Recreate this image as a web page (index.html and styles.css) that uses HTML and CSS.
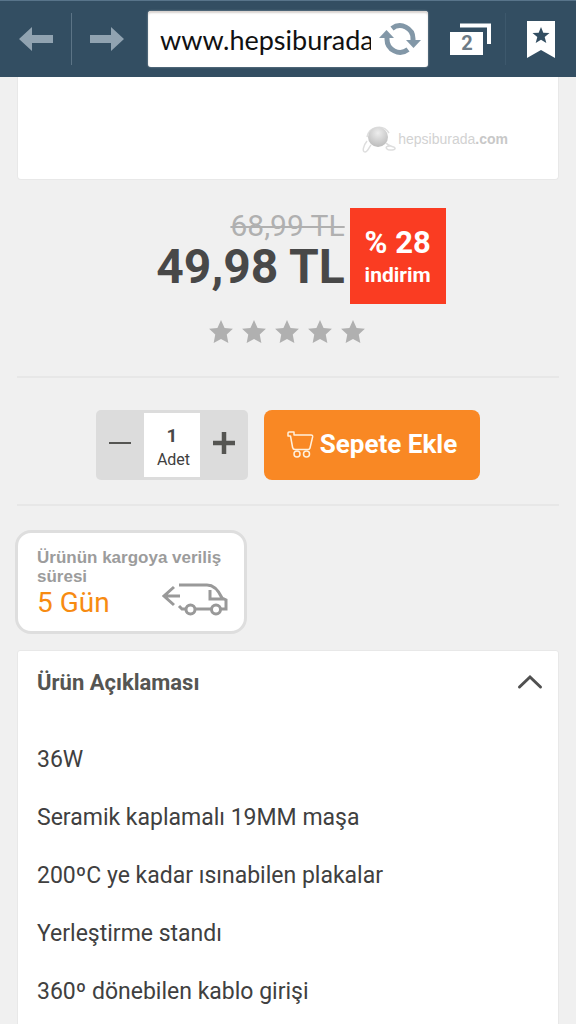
FILE: index.html
```html
<!DOCTYPE html>
<html lang="tr">
<head>
<meta charset="utf-8">
<meta name="viewport" content="width=device-width, initial-scale=1">
<title>hepsiburada.com</title>
<link rel="stylesheet" href="styles.css">
</head>
<body>
<header class="browser-bar">
  <button class="bar-button bar-button-split" aria-label="Geri">
    <svg width="36" height="24" viewBox="0 0 36 24"><path d="M1 12 14 0v8h21v8H14v8z" fill="#91a3b1"/></svg>
  </button>
  <button class="bar-button bar-button-forward" aria-label="İleri">
    <svg width="36" height="24" viewBox="0 0 36 24"><path d="M35 12 22 0v8H1v8h21v8z" fill="#91a3b1"/></svg>
  </button>
  <div class="address">
    <input class="address-input" type="text" aria-label="Adres" value="www.hepsiburada.com">
    <button class="reload" aria-label="Yenile">
      <svg width="42" height="34" viewBox="0 0 42 34">
        <g fill="none" stroke="#8297a7" stroke-width="5"><path d="M13 6.500A13 13 0 0 1 34 17v3"/><path d="M29 27.500A13 13 0 0 1 8 17v-3"/></g>
        <path d="M27 18h15l-7.500 8zM0 16h15L7.500 8z" fill="#8297a7"/>
      </svg>
    </button>
  </div>
  <button class="bar-button bar-button-dim" aria-label="Sekmeler">
    <span class="tabs">
      <svg width="41" height="32" viewBox="0 0 41 32"><path d="M10 2.500h29V21" fill="none" stroke="#fff" stroke-width="4"/><path d="M0 9h33v23H0z" fill="#fff"/></svg>
      <span class="tabs-count">2</span>
    </span>
  </button>
  <button class="bar-button" aria-label="Yer imleri">
    <svg width="28" height="37" viewBox="0 0 28 37"><path d="M0 0h28v37l-14-8-14 8z" fill="#fff"/><path d="m14 6 2.300 5.700 6.200.4-4.800 3.900 1.600 6-5.300-3.300L8.700 22l1.600-6-4.800-3.900 6.200-.4z" fill="#334e62"/></svg>
  </button>
</header>

<main class="page">
  <div class="photo-card">
    <div class="brand">
      <svg width="36" height="29" viewBox="0 0 36 29">
        <defs><radialGradient id="ball" cx=".5" cy=".3" r=".7"><stop offset="0" stop-color="#ededed"/><stop offset="1" stop-color="#bcbcbc"/></radialGradient></defs>
        <g fill="none" stroke="#dedede" stroke-width="1.500"><path d="M5 16C1 21 0 27 3 27s4-5 6-7M24 18c3 4 8 3 9 5s-6 3-8 1 0-3 3-3M5 12a12 12 0 0 1 22-4"/></g>
        <circle cx="16" cy="12" r="10" fill="url(#ball)"/>
      </svg>
      <span class="brand-name">hepsiburada<b class="brand-tld">.com</b></span>
    </div>
  </div>

  <section class="pricing">
    <div class="prices">
      <del class="price-old">68,99 TL</del>
      <strong class="price-now">49,98 TL</strong>
    </div>
    <div class="discount"><span class="discount-rate">% 28</span><span class="discount-label">indirim</span></div>
  </section>

  <div class="stars" role="img" aria-label="Henüz değerlendirilmedi">
    <svg class="star" viewBox="0 0 24 24"><path d="m12 1 3.300 7.200 7.700.9-5.700 5.300 1.500 7.800-6.800-3.800-6.800 3.800 1.500-7.800L1 9.100l7.700-.9z"/></svg>
    <svg class="star" viewBox="0 0 24 24"><path d="m12 1 3.300 7.200 7.700.9-5.700 5.300 1.500 7.800-6.800-3.800-6.800 3.800 1.500-7.800L1 9.100l7.700-.9z"/></svg>
    <svg class="star" viewBox="0 0 24 24"><path d="m12 1 3.300 7.200 7.700.9-5.700 5.300 1.500 7.800-6.800-3.800-6.800 3.800 1.500-7.800L1 9.100l7.700-.9z"/></svg>
    <svg class="star" viewBox="0 0 24 24"><path d="m12 1 3.300 7.200 7.700.9-5.700 5.300 1.500 7.800-6.800-3.800-6.800 3.800 1.500-7.800L1 9.100l7.700-.9z"/></svg>
    <svg class="star" viewBox="0 0 24 24"><path d="m12 1 3.300 7.200 7.700.9-5.700 5.300 1.500 7.800-6.800-3.800-6.800 3.800 1.500-7.800L1 9.100l7.700-.9z"/></svg>
  </div>

  <section class="buy">
    <div class="stepper">
      <button class="step" aria-label="Azalt"><svg width="22" height="22" viewBox="0 0 22 22"><path d="M0 11h22" stroke="#555552" stroke-width="2"/></svg></button>
      <div class="quantity">
        <input class="quantity-input" id="quantity" type="text" inputmode="numeric" value="1">
        <label class="quantity-label" for="quantity">Adet</label>
      </div>
      <button class="step" aria-label="Artır"><svg width="22" height="22" viewBox="0 0 22 22"><path d="M0 11h22M11 0v22" stroke="#555552" stroke-width="4.500"/></svg></button>
    </div>
    <button class="add-to-cart">
      <svg width="27" height="27" viewBox="0 0 27 27" fill="none" stroke="#fff0dc" stroke-width="1.500" stroke-linejoin="round"><path d="M1 5V2q0-1 1-1h5v3h17q2 0 1.600 2L23 17q-.3 1.500-2 1.500H8q-2 0-2.400-2L3.500 5z"/><circle cx="10" cy="23" r="3"/><circle cx="19.500" cy="23" r="3"/></svg>
      Sepete Ekle
    </button>
  </section>

  <section class="shipping">
    <div class="shipping-title">Ürünün kargoya veriliş süresi</div>
    <div class="shipping-row">
      <span class="shipping-days">5 Gün</span>
      <svg class="van" width="66" height="34" viewBox="0 0 66 34" fill="none" stroke="#999" stroke-width="3"><path d="M18 14H2M12 5 2 14l10 9M17 3h28q9 0 15 13l4 2v9h-5M17 24l3 3h3M34 27h15M48 8v9h13"/><circle cx="28.500" cy="27.500" r="4.500"/><circle cx="54" cy="27.500" r="4.500"/></svg>
    </div>
  </section>

  <section class="description">
    <h2 class="description-heading">
      <button class="description-toggle" aria-expanded="true">Ürün Açıklaması
        <svg width="26" height="16" viewBox="0 0 26 16"><path d="m2.500 13 10.500-10 10.500 10" fill="none" stroke="#505050" stroke-width="3" stroke-linecap="round"/></svg>
      </button>
    </h2>
    <p class="feature">36W</p>
    <p class="feature">Seramik kaplamalı 19MM maşa</p>
    <p class="feature">200ºC ye kadar ısınabilen plakalar</p>
    <p class="feature">Yerleştirme standı</p>
    <p class="feature">360º dönebilen kablo girişi</p>
  </section>
</main>
</body>
</html>
```

FILE: styles.css
```css
* { box-sizing: border-box; }

body {
  margin: 0;
  background: #f0f0f0;
  color: #404040;
  font-family: Roboto, "Liberation Sans", sans-serif;
}

button {
  margin: 0;
  padding: 0;
  border: 0;
  background: none;
  color: inherit;
  font: inherit;
  cursor: pointer;
}

svg { display: block; flex: none; }

.browser-bar {
  display: grid;
  grid-template-columns: 72px 76px minmax(0, 1fr) 78px 70px;
  align-items: center;
  height: 77px;
  border-top: 1px solid #58748a;
  background: #334e62;
}

.bar-button {
  display: flex;
  align-items: center;
  justify-content: center;
  height: 52px;
}

.bar-button-split { border-right: 1px solid #5c7486; }
.bar-button-forward { padding-right: 6px; }
.bar-button-dim { padding-left: 8px; border-right: 1px solid #3d586c; }

.address {
  display: flex;
  align-items: center;
  gap: 8px;
  height: 56px;
  padding: 0 7px 0 12px;
  border-radius: 3px;
  background: #fff;
  box-shadow: inset 0 2px 2px #d8d3d0, 0 0 2px #9aa8b2;
}

.address-input {
  flex: 1;
  min-width: 0;
  padding: 0;
  border: 0;
  outline: 0;
  background: none;
  color: #111;
  font: 27px Lato, sans-serif;
}

.tabs { position: relative; }

.tabs-count {
  position: absolute;
  left: 0;
  bottom: 0;
  width: 34px;
  color: #6d7b86;
  font-size: 20px;
  font-weight: 700;
  line-height: 23px;
  text-align: center;
}

.page { padding: 0 17px; }

.photo-card {
  display: flex;
  align-items: flex-end;
  justify-content: flex-end;
  height: 103px;
  padding: 0 50px 25px 0;
  border: 1px solid #e8e8e8;
  border-top: 0;
  border-radius: 0 0 4px 4px;
  background: #fff;
}

.brand { display: flex; align-items: center; }

.brand-name {
  padding-bottom: 2px;
  color: #d2d2d2;
  font: 14px "Liberation Sans", Arial, sans-serif;
}

.brand-tld { color: #c8c8c8; font-weight: 700; }

.pricing {
  display: flex;
  justify-content: center;
  gap: 5px;
  margin-top: 28px;
  padding-left: 26px;
}

.prices {
  display: flex;
  flex-direction: column;
  align-items: flex-end;
}

.price-old {
  color: #b0b0b0;
  font-size: 30px;
  line-height: 36px;
  text-decoration-thickness: 2px;
}

.price-now {
  color: #484848;
  font-size: 48px;
  line-height: 46px;
}

.discount {
  display: flex;
  flex-direction: column;
  align-items: center;
  justify-content: center;
  width: 96px;
  height: 96px;
  padding-top: 4px;
  background: #fa3c22;
  color: #fff;
  font-weight: 700;
}

.discount-rate { font-size: 31px; line-height: 34px; }
.discount-label { font-size: 21px; line-height: 30px; }

.stars {
  display: flex;
  justify-content: center;
  gap: 7px;
  margin-top: 15px;
  padding: 0 2px 31px 0;
  border-bottom: 2px solid #e7e7e7;
}

.star { width: 26px; height: 26px; fill: #b0b0b0; }

.buy {
  display: flex;
  justify-content: center;
  gap: 16px;
  padding: 32px 0 24px;
  border-bottom: 2px solid #e7e7e7;
}

.stepper {
  display: grid;
  grid-template-columns: 48px 56px 48px;
  height: 70px;
  border-radius: 5px;
  background: #dcdcdc;
}

.step {
  display: flex;
  align-items: center;
  justify-content: center;
  padding-bottom: 4px;
}

.quantity {
  display: flex;
  flex-direction: column;
  align-items: center;
  justify-content: center;
  margin: 3px 0;
  padding-top: 6px;
  background: #fff;
}

.quantity-input {
  width: 100%;
  padding: 0;
  border: 0;
  outline: 0;
  background: none;
  color: #484848;
  font: 700 19px/24px Roboto, sans-serif;
  text-align: center;
}

.quantity-label { padding-left: 3px; font-size: 16px; line-height: 24px; }

.add-to-cart {
  display: flex;
  align-items: center;
  justify-content: center;
  gap: 6px;
  width: 216px;
  height: 70px;
  padding-bottom: 2px;
  border-radius: 8px;
  background: #f98824;
  color: #fff;
  font-size: 26px;
  font-weight: 700;
}

.shipping {
  width: 232px;
  margin: 24px 0 16px -2px;
  padding: 15px 16px 11px 19px;
  border: 3px solid #dedede;
  border-radius: 16px;
  background: #fff;
}

.shipping-title {
  color: #9c9c9c;
  font: 700 17px/19px "Liberation Sans", Arial, sans-serif;
}

.shipping-row {
  display: flex;
  align-items: center;
  justify-content: space-between;
}

.shipping-days { color: #f78b12; font-size: 28px; line-height: 34px; }

.van { margin-top: -8px; }

.description {
  padding: 0 15px 8px 19px;
  border: 1px solid #e8e8e8;
  border-radius: 3px;
  background: #fff;
}

.description-heading { margin: 0 0 18px; }

.description-toggle {
  display: flex;
  align-items: center;
  justify-content: space-between;
  width: 100%;
  height: 62px;
  color: #555552;
  font-size: 22px;
  font-weight: 700;
}

.feature { margin: 0; font-size: 23px; line-height: 58px; }
```
